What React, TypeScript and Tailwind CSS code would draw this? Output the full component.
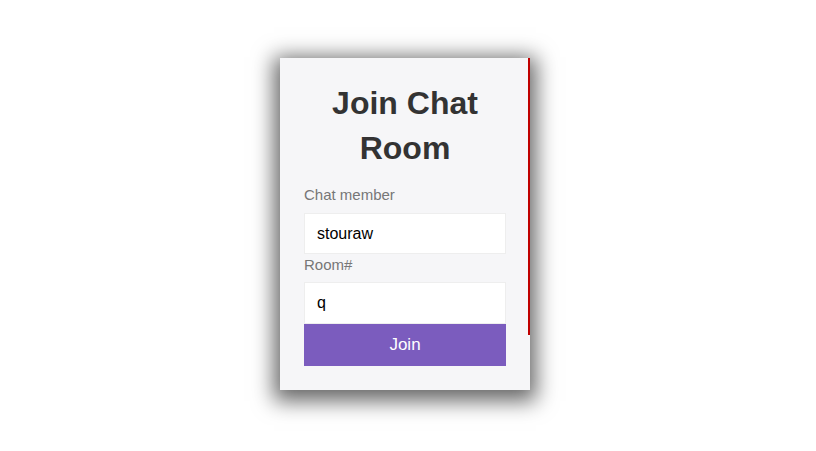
import React from "react"

export default function App() {
  return (
    <div className="min-h-[451px] w-full bg-white flex justify-center pt-[58px] font-['Liberation_Sans',Arial,sans-serif]">
      <div className="relative mr-[6px] w-[250px] h-[332px] bg-[#f6f6f8] px-6 pt-[23px] shadow-[0_5px_20px_6px_rgba(0,0,0,0.6)]">
        {/* thin red edge on the right */}
        <div className="absolute right-0 top-0 w-[2px] h-[277px] bg-[#c00000]" />
        <h1 className="text-[32px] leading-[45px] font-bold text-[#333] text-center">Join Chat Room</h1>
        <form className="mt-[13px] flex flex-col" onSubmit={(e) => e.preventDefault()}>
          <label className="text-[15px] leading-[21px] text-[#777] mb-[8px]">Chat member</label>
          <input
            defaultValue="stouraw"
            className="h-[41px] bg-white border border-[#eee] px-3 text-[16px] text-black outline-none"
          />
          <label className="text-[15px] leading-[21px] text-[#777] mb-[7px]">Room#</label>
          <input
            defaultValue="q"
            className="h-[42px] bg-white border border-[#eee] px-3 text-[16px] text-black outline-none"
          />
          <button type="submit" className="h-[42px] bg-[#7b5cbe] text-white text-[17px]">
            Join
          </button>
        </form>
      </div>
    </div>
  )
}
